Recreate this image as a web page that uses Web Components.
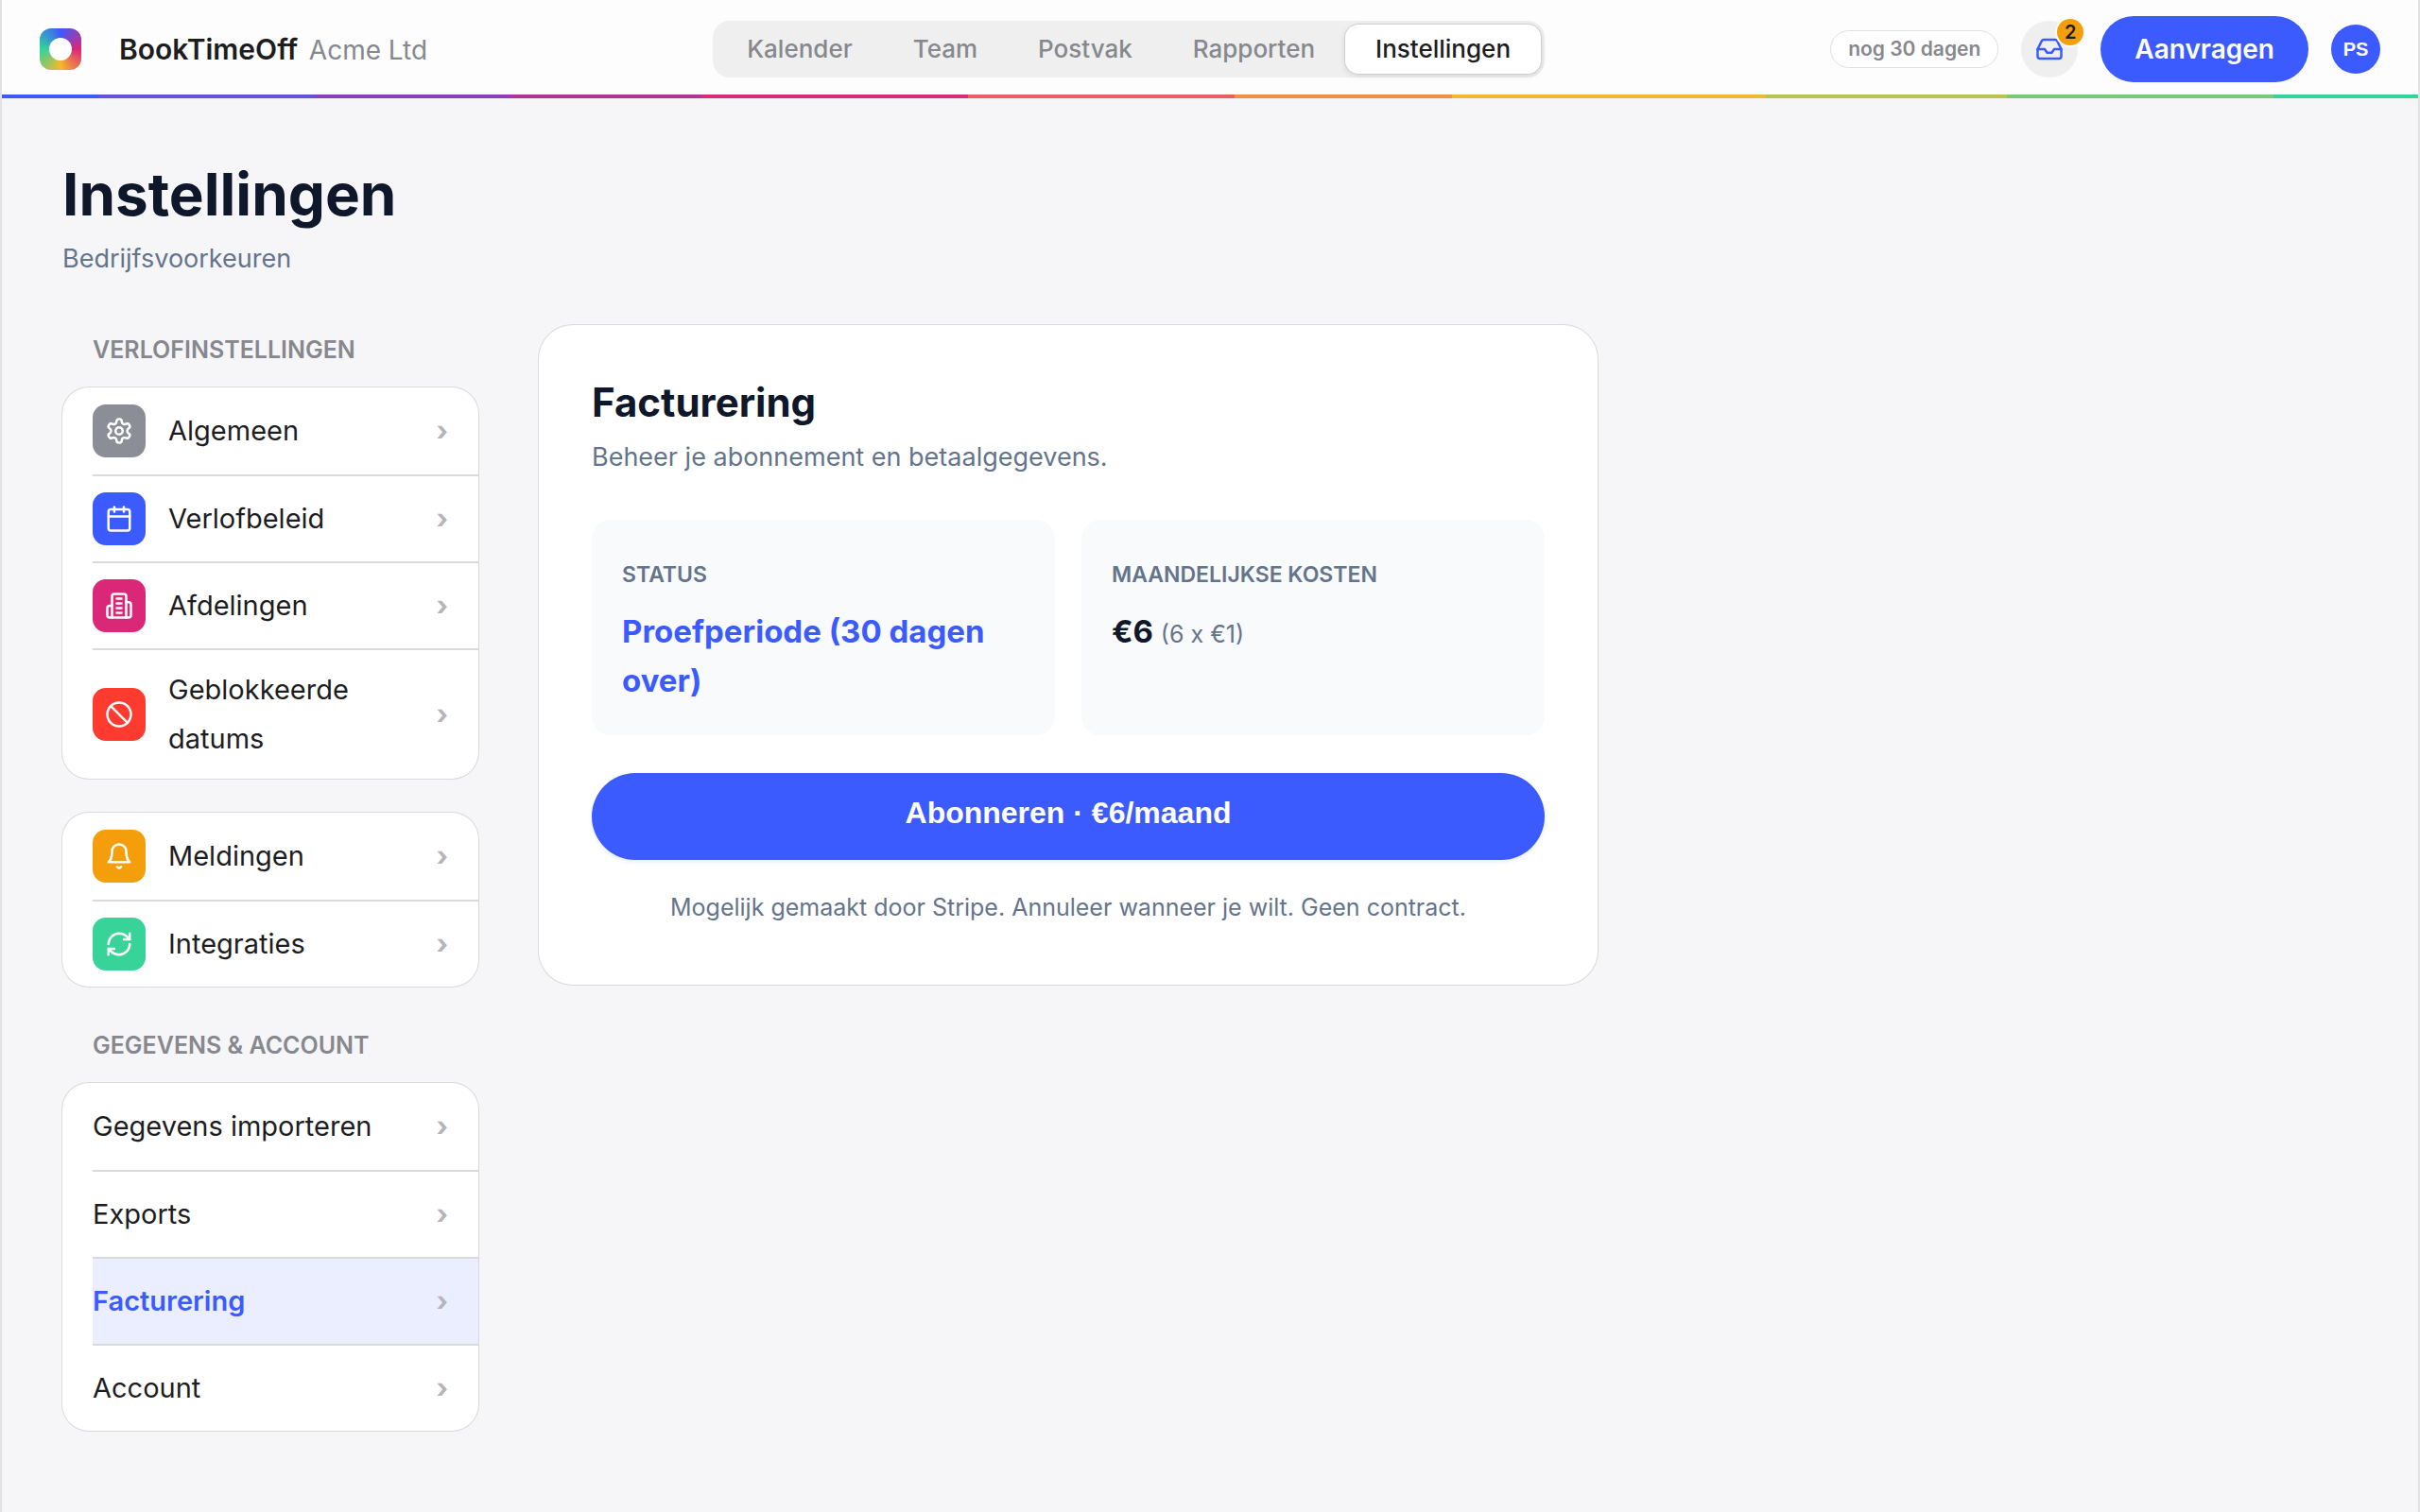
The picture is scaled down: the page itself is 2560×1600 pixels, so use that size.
<!DOCTYPE html>
<html lang="nl">
<head>
<meta charset="utf-8">
<meta name="viewport" content="width=device-width, initial-scale=1">
<title>Instellingen - BookTimeOff</title>
<style>
    body {
        --blue: #3b5bff;
        --ink: #0f172a;
        --text: #1d1d1f;
        --slate: #64748b;
        --gray: #86888e;
        --line: #dadadd;
        margin: 0;
        min-height: 100vh;
        box-sizing: border-box;
        border: solid #e2e2e5;
        border-width: 0 2px;
        background: #f6f6f9;
        color: var(--text);
        font: 400 29px/52px Inter, "Liberation Sans", sans-serif;
    }
</style>
</head>
<body>
    <app-header>
        <nav-tab>Kalender</nav-tab>
        <nav-tab>Team</nav-tab>
        <nav-tab>Postvak</nav-tab>
        <nav-tab>Rapporten</nav-tab>
        <nav-tab active>Instellingen</nav-tab>
    </app-header>
    <settings-page>
        <span slot="title">Instellingen</span>
        <span slot="subtitle">Bedrijfsvoorkeuren</span>

        <settings-group slot="menu" label="Verlofinstellingen">
            <settings-item icon="gear" color="#8b8e96">Algemeen</settings-item>
            <settings-item icon="calendar" color="#3b5bff">Verlofbeleid</settings-item>
            <settings-item icon="building" color="#db2777">Afdelingen</settings-item>
            <settings-item icon="ban" color="#ff3b30">Geblokkeerde datums</settings-item>
        </settings-group>
        <settings-group slot="menu">
            <settings-item icon="bell" color="#f59e0b">Meldingen</settings-item>
            <settings-item icon="sync" color="#37d399">Integraties</settings-item>
        </settings-group>
        <settings-group slot="menu" label="Gegevens &amp; account">
            <settings-item>Gegevens importeren</settings-item>
            <settings-item>Exports</settings-item>
            <settings-item active>Facturering</settings-item>
            <settings-item>Account</settings-item>
        </settings-group>

        <billing-panel>
            <stat-box label="Status" accent>Proefperiode (30 dagen over)</stat-box>
            <stat-box label="Maandelijkse kosten">€6 <small slot="note">(6 x €1)</small></stat-box>
        </billing-panel>
    </settings-page>

<script>
    const ICONS = {
        gear: `<path d="M12.22 2h-.44a2 2 0 0 0-2 2v.18a2 2 0 0 1-1 1.73l-.43.25a2 2 0 0 1-2 0l-.15-.08a2 2 0 0 0-2.73.73l-.22.38a2 2 0 0 0 .73 2.73l.15.1a2 2 0 0 1 1 1.72v.51a2 2 0 0 1-1 1.74l-.15.09a2 2 0 0 0-.73 2.73l.22.38a2 2 0 0 0 2.73.73l.15-.08a2 2 0 0 1 2 0l.43.25a2 2 0 0 1 1 1.73V20a2 2 0 0 0 2 2h.44a2 2 0 0 0 2-2v-.18a2 2 0 0 1 1-1.73l.43-.25a2 2 0 0 1 2 0l.15.08a2 2 0 0 0 2.73-.73l.22-.39a2 2 0 0 0-.73-2.73l-.15-.08a2 2 0 0 1-1-1.74v-.5a2 2 0 0 1 1-1.74l.15-.09a2 2 0 0 0 .73-2.73l-.22-.38a2 2 0 0 0-2.73-.73l-.15.08a2 2 0 0 1-2 0l-.43-.25a2 2 0 0 1-1-1.73V4a2 2 0 0 0-2-2z"/><circle cx="12" cy="12" r="3"/>`,
        calendar: `<path d="M8 2v4M16 2v4M3 10h18"/><rect x="3" y="4" width="18" height="18" rx="2"/>`,
        building: `<path d="M6 22V4a2 2 0 0 1 2-2h8a2 2 0 0 1 2 2v18Z"/><path d="M6 12H4a2 2 0 0 0-2 2v6a2 2 0 0 0 2 2h2M18 9h2a2 2 0 0 1 2 2v9a2 2 0 0 1-2 2h-2M10 6h4M10 10h4M10 14h4M10 18h4"/>`,
        ban: `<circle cx="12" cy="12" r="10"/><path d="m4.9 4.9 14.2 14.2"/>`,
        bell: `<path d="M6 8a6 6 0 0 1 12 0c0 7 3 9 3 9H3s3-2 3-9M10.3 21a1.94 1.94 0 0 0 3.4 0"/>`,
        sync: `<path d="M3 12a9 9 0 0 1 9-9 9.75 9.75 0 0 1 6.74 2.74L21 8"/><path d="M21 3v5h-5M21 12a9 9 0 0 1-9 9 9.75 9.75 0 0 1-6.74-2.74L3 16"/><path d="M8 16H3v5"/>`,
        inbox: `<path d="M22 12h-6l-2 3h-4l-2-3H2"/><path d="M5.45 5.11 2 12v6a2 2 0 0 0 2 2h16a2 2 0 0 0 2-2v-6l-3.45-6.89A2 2 0 0 0 16.76 4H7.24a2 2 0 0 0-1.79 1.11z"/>`
    };

    const icon = (name) => `<svg viewBox="0 0 24 24" fill="none" stroke="currentColor" stroke-width="2" stroke-linecap="round" stroke-linejoin="round" aria-hidden="true">${ICONS[name]}</svg>`;

    /* Base: attaches the shadow root and clones the template of each element. */
    class BaseElement extends HTMLElement {
        constructor() {
            super();
            this.attachShadow({ mode: "open" });
        }

        connectedCallback() {
            const template = document.createElement("template");
            template.innerHTML = `<style>${this.getStyles()}</style>${this.getTemplate()}`;
            this.shadowRoot.replaceChildren(template.content.cloneNode(true));
        }
    }

    class AppHeader extends BaseElement {
        getTemplate() {
            return `
                <header>
                    <a class="brand" href="#">
                        <span class="logo"></span>
                        <span class="name">BookTimeOff <span class="company">Acme Ltd</span></span>
                    </a>
                    <nav><slot></slot></nav>
                    <div class="actions">
                        <span class="trial">nog 30 dagen</span>
                        <button class="inbox" aria-label="Postvak">${icon("inbox")}<span class="badge">2</span></button>
                        <button class="request">Aanvragen</button>
                        <button class="avatar">PS</button>
                    </div>
                </header>
                <div class="rainbow"></div>
            `;
        }

        getStyles() {
            return `
                :host { display: block; background: #fdfdfe; }
                header {
                    display: flex;
                    align-items: center;
                    justify-content: space-between;
                    min-height: 96px;
                    padding: 4px 40px 0;
                }
                .brand { display: flex; align-items: center; gap: 40px; color: var(--text); text-decoration: none; }
                .logo {
                    display: grid;
                    place-items: center;
                    width: 44px;
                    height: 44px;
                    border-radius: 12px;
                    background: conic-gradient(#3b5bff, #db2777, #f5b82e, #34d399, #3b5bff);
                }
                .logo::after { content: ""; width: 24px; height: 24px; border-radius: 50%; background: #fff; }
                .name { font-size: 30px; font-weight: 600; }
                .company { margin-left: 4px; font-size: 28px; font-weight: 400; color: var(--gray); }
                nav { display: flex; padding: 4px; border-radius: 18px; background: #efefef; }
                .actions { display: flex; align-items: center; gap: 24px; }
                .trial {
                    padding: 0 18px;
                    border: 1px solid #e0e0e3;
                    border-radius: 20px;
                    background: #fff;
                    color: var(--gray);
                    font-size: 21px;
                    font-weight: 600;
                    line-height: 38px;
                }
                button { border: 0; padding: 0; font-family: inherit; cursor: pointer; }
                .inbox {
                    position: relative;
                    display: grid;
                    place-items: center;
                    width: 60px;
                    height: 60px;
                    border-radius: 50%;
                    background: #efefef;
                    color: var(--blue);
                }
                .inbox svg { width: 30px; height: 30px; }
                .badge {
                    position: absolute;
                    top: -2px;
                    right: -6px;
                    width: 28px;
                    border-radius: 14px;
                    background: #f59e0b;
                    box-shadow: 0 0 0 2px #fdfdfe;
                    color: var(--text);
                    font-size: 20px;
                    font-weight: 600;
                    line-height: 28px;
                }
                .request {
                    height: 70px;
                    padding: 0 36px;
                    border-radius: 35px;
                    background: var(--blue);
                    color: #fff;
                    font-size: 28px;
                    font-weight: 600;
                }
                .avatar {
                    width: 52px;
                    height: 52px;
                    border-radius: 50%;
                    background: var(--blue);
                    color: #fff;
                    font: 700 20px "Liberation Sans", Arial, sans-serif;
                }
                .rainbow {
                    height: 4px;
                    background: linear-gradient(90deg,
                        #3b5bff 4%, #6450dd 4% 13%, #8b3fb8 13% 21%, #b23397 21% 29%,
                        #db2b76 29% 40%, #ea5f5f 40% 51%, #f08f46 51% 60%, #f0b82e 60% 73%,
                        #b8c44f 73% 83%, #7ac974 83% 94%, #34d399 94%);
                }
            `;
        }
    }

    class NavTab extends BaseElement {
        getTemplate() {
            return `<a href="#"><slot></slot></a>`;
        }

        getStyles() {
            return `
                :host { display: block; }
                a {
                    display: block;
                    padding: 0 32px;
                    border-radius: 14px;
                    color: var(--gray);
                    font-size: 26px;
                    font-weight: 500;
                    text-decoration: none;
                }
                :host([active]) a {
                    background: #fff;
                    color: var(--text);
                    box-shadow: 0 0 0 1px #d0d0d3, 0 2px 6px rgba(0, 0, 0, .12);
                }
            `;
        }
    }

    class SettingsPage extends BaseElement {
        getTemplate() {
            return `
                <h1><slot name="title"></slot></h1>
                <p><slot name="subtitle"></slot></p>
                <div class="columns">
                    <aside><slot name="menu"></slot></aside>
                    <main><slot></slot></main>
                </div>
            `;
        }

        getStyles() {
            return `
                :host { display: block; padding: 64px; }
                h1 { margin: 0 0 4px; color: var(--ink); font-size: 62px; font-weight: 700; line-height: 76px; }
                p { margin: 0 0 44px; color: var(--slate); font-size: 27px; }
                .columns { display: grid; grid-template-columns: 440px minmax(0, 1120px); gap: 64px; align-items: start; }
                aside { display: flex; flex-direction: column; gap: 36px; }
            `;
        }
    }

    class SettingsGroup extends BaseElement {
        getTemplate() {
            const label = this.getAttribute("label");
            return `
                ${label ? `<h2>${label}</h2>` : ""}
                <nav><slot></slot></nav>
            `;
        }

        getStyles() {
            return `
                :host { display: block; }
                h2 {
                    margin: 0 0 20px;
                    padding: 6px 32px 0;
                    color: var(--gray);
                    font-size: 25px;
                    font-weight: 600;
                    line-height: 40px;
                    text-transform: uppercase;
                }
                nav {
                    overflow: hidden;
                    padding-left: 32px;
                    border-radius: 28px;
                    background: #fff;
                    box-shadow: 0 0 0 1px var(--line);
                }
                ::slotted(:not(:first-child)) { border-top: 2px solid var(--line); }
            `;
        }
    }

    class SettingsItem extends BaseElement {
        getTemplate() {
            const name = this.getAttribute("icon");
            return `
                <a href="#">
                    ${name ? `<span class="tile" style="background: ${this.getAttribute("color")}">${icon(name)}</span>` : ""}
                    <span class="label"><slot></slot></span>
                    <span class="chevron" aria-hidden="true">›</span>
                </a>
            `;
        }

        getStyles() {
            return `
                :host { display: grid; box-sizing: border-box; min-height: 92px; }
                a {
                    display: flex;
                    align-items: center;
                    gap: 24px;
                    padding: 16px 32px 16px 0;
                    color: inherit;
                    text-decoration: none;
                }
                .tile {
                    display: grid;
                    place-items: center;
                    flex: none;
                    width: 56px;
                    height: 56px;
                    border-radius: 14px;
                    color: #fff;
                }
                .tile svg { width: 30px; height: 30px; }
                .label { flex: 1; }
                .chevron { color: #b4b4b9; font-weight: 700; }
                :host([active]) { background: #ebeeff; }
                :host([active]) .label { color: var(--blue); font-weight: 600; }
            `;
        }
    }

    class BillingPanel extends BaseElement {
        getTemplate() {
            return `
                <h2>Facturering</h2>
                <p class="intro">Beheer je abonnement en betaalgegevens.</p>
                <div class="stats"><slot></slot></div>
                <button>Abonneren · €6/maand</button>
                <p class="note">Mogelijk gemaakt door Stripe. Annuleer wanneer je wilt. Geen contract.</p>
            `;
        }

        getStyles() {
            return `
                :host {
                    display: block;
                    padding: 56px;
                    border-radius: 36px;
                    background: #fff;
                    box-shadow: 0 0 0 1px var(--line);
                }
                h2 { margin: 0 0 6px; color: var(--ink); font-size: 42px; font-weight: 700; line-height: 52px; }
                p { margin: 0; color: var(--slate); }
                .intro { font-size: 27px; }
                .stats { display: grid; grid-template-columns: 1fr 1fr; gap: 28px; margin: 40px 0; }
                button {
                    display: block;
                    width: 100%;
                    padding: 24px 32px 32px;
                    border: 0;
                    border-radius: 46px;
                    background: var(--blue);
                    color: #fff;
                    font: 700 32px/36px "Liberation Sans", Arial, sans-serif;
                    box-shadow: 0 2px 4px rgba(59, 91, 255, .12);
                    cursor: pointer;
                }
                .note { margin-top: 24px; font-size: 25px; text-align: center; }
            `;
        }
    }

    class StatBox extends BaseElement {
        getTemplate() {
            return `
                <div class="label">${this.getAttribute("label")}</div>
                <div class="value"><slot></slot><slot name="note"></slot></div>
            `;
        }

        getStyles() {
            return `
                :host { display: block; padding: 32px; border-radius: 20px; background: #f8fafc; }
                .label {
                    margin-bottom: 8px;
                    color: var(--slate);
                    font-size: 23px;
                    font-weight: 600;
                    text-transform: uppercase;
                }
                .value { color: var(--ink); font-size: 33px; font-weight: 700; }
                :host([accent]) .value { color: var(--blue); }
                ::slotted(small) { color: var(--slate); font-size: 25px; font-weight: 400; }
            `;
        }
    }

    customElements.define("app-header", AppHeader);
    customElements.define("nav-tab", NavTab);
    customElements.define("settings-page", SettingsPage);
    customElements.define("settings-group", SettingsGroup);
    customElements.define("settings-item", SettingsItem);
    customElements.define("billing-panel", BillingPanel);
    customElements.define("stat-box", StatBox);
</script>
</body>
</html>
